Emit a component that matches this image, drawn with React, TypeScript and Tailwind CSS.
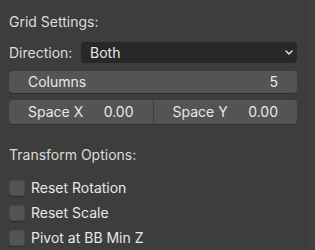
import React from 'react';

// Campo numérico no estilo Blender
function NumberField({ label, value, className = '' }: { label: string; value: string; className?: string }) {
  return (
    <div className={`flex items-center justify-between h-[24px] bg-[#545454] px-[19px] text-[#e8e8e8] shadow-[0_1px_0_#2e2e2e] ${className}`}>
      <span>{label}</span>
      <span>{value}</span>
    </div>
  );
}

function Checkbox({ label }: { label: string }) {
  return (
    <div className="flex items-center h-[25px] gap-[6px]">
      <div className="w-[16px] h-[16px] rounded-[3px] bg-[#545454] border border-[#4a4a4a] shadow-[0_1px_0_#2e2e2e]" />
      <span className="text-[#e8e8e8]">{label}</span>
    </div>
  );
}

export default function App() {
  return (
    <div className="w-[315px] h-[250px] bg-[#3d3d3d] flex overflow-hidden font-['Inter',sans-serif] text-[14px] leading-4">
      <div className="flex-1 flex flex-col pl-[9px] pr-[10px]">
        <div className="mt-[14px] h-4 text-[#dcdcdc]">Grid Settings:</div>

        <div className="mt-[12px] flex items-center h-[23px]">
          <span className="w-[72px] text-[#dcdcdc]">Direction:</span>
          <div className="flex-1 h-full flex items-center justify-between bg-[#282828] rounded-[4px] pl-[9px] pr-[4px] text-[#e8e8e8]">
            <span>Both</span>
            <svg width="8" height="5" viewBox="0 0 8 5" fill="none">
              <path d="M1 1L4 4L7 1" stroke="#e8e8e8" strokeWidth="1.4" strokeLinecap="round" strokeLinejoin="round" />
            </svg>
          </div>
        </div>

        <NumberField label="Columns" value="5" className="mt-[8px] rounded-[4px]" />

        <div className="mt-[7px] flex gap-[1px]">
          <NumberField label="Space X" value="0.00" className="flex-1 rounded-l-[4px]" />
          <NumberField label="Space Y" value="0.00" className="flex-1 rounded-r-[4px]" />
        </div>

        <div className="mt-[23px] h-4 text-[#dcdcdc]">Transform Options:</div>

        <div className="mt-[12px] flex flex-col">
          <Checkbox label="Reset Rotation" />
          <Checkbox label="Reset Scale" />
          <Checkbox label="Pivot at BB Min Z" />
        </div>
      </div>
      <div className="w-[8px] bg-[#3f3f3f] border-l border-[#3b3b3b]" />
    </div>
  );
}
